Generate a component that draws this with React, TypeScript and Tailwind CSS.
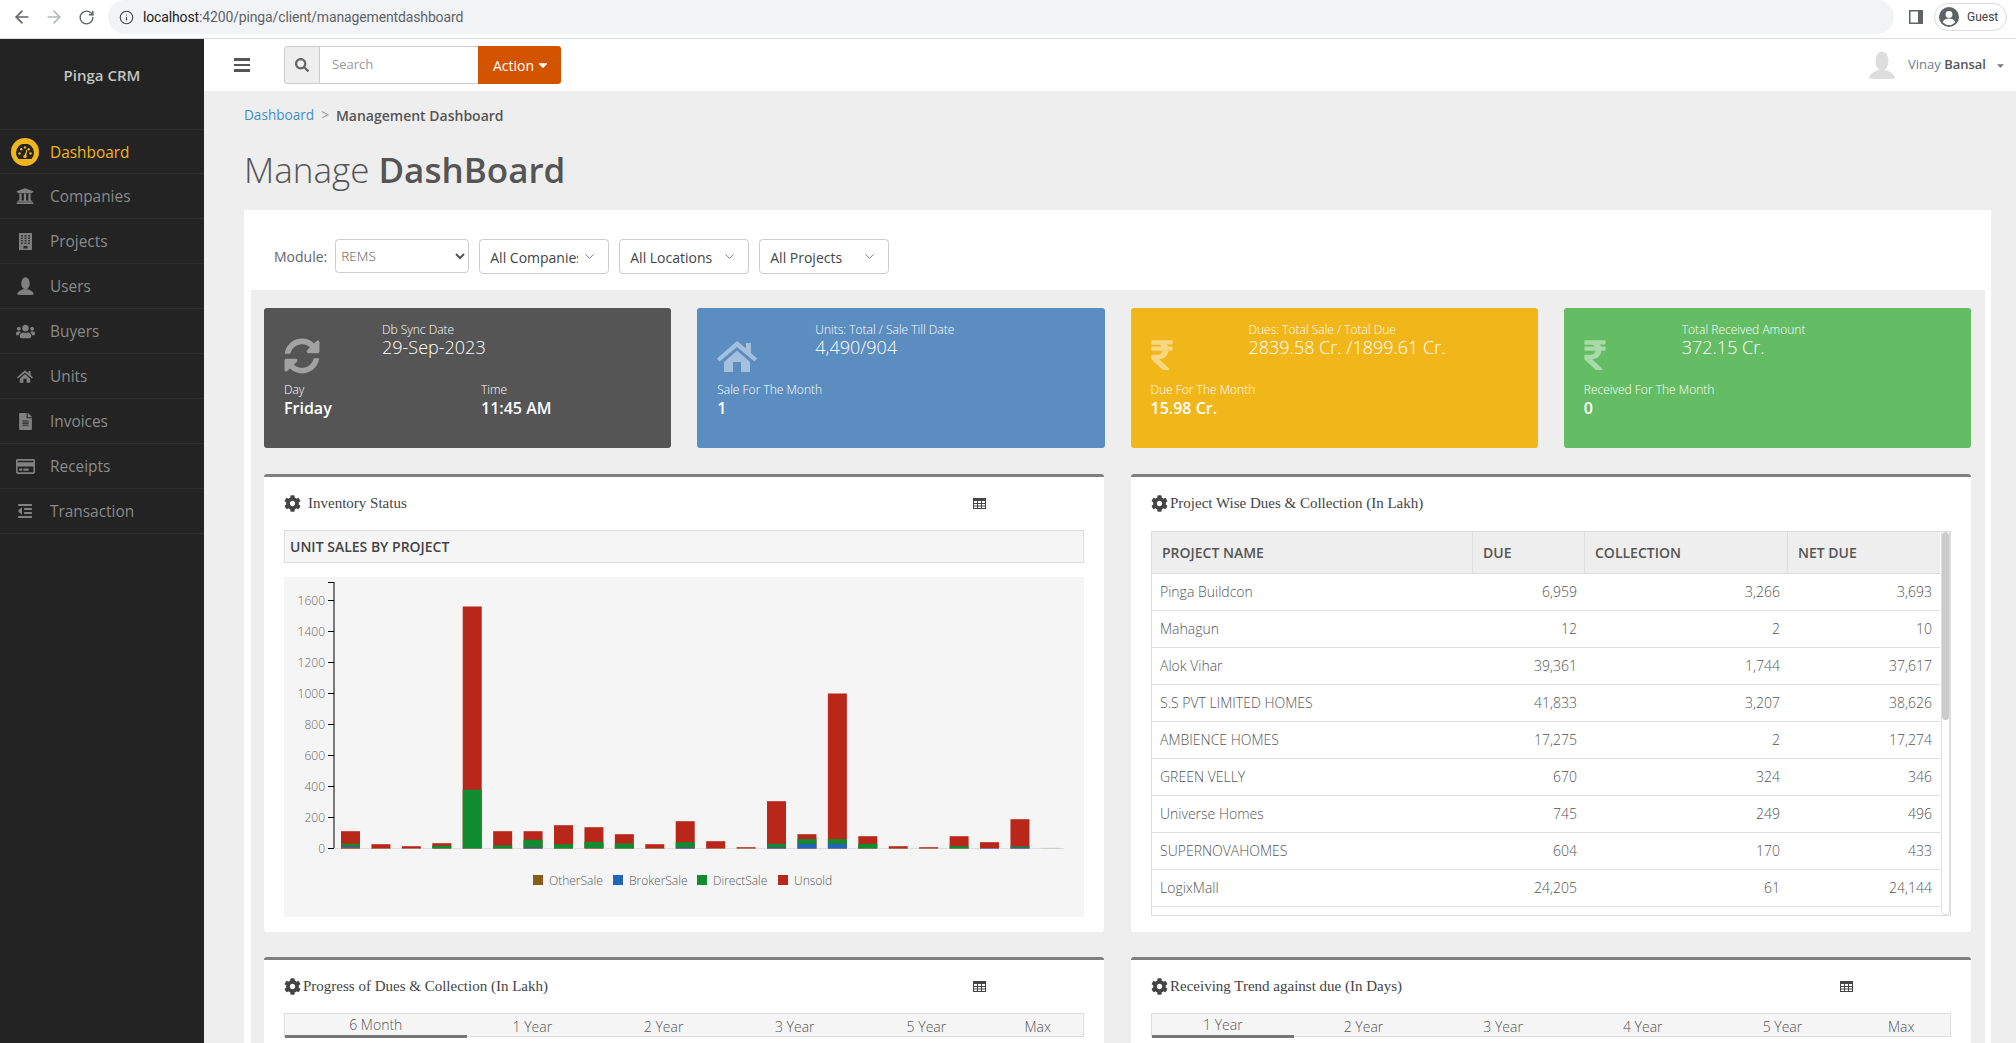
import { ArrowLeft, ArrowRight, ChevronDown, Info, RotateCw } from 'lucide-react'
import {
  FaCaretDown, FaCog, FaFileAlt, FaOutdent, FaRegCreditCard, FaRupeeSign,
  FaSearch, FaSyncAlt, FaUniversity, FaUsers,
} from 'react-icons/fa'
import type { ReactNode } from 'react'

function HomeIcon({ className }: { className: string }) {
  return (
    <svg viewBox="0 0 40 31" className={className} fill="currentColor">
      <path d="M20 0l9 7.500V2h5v10l6 5.500-2.500 3L20 6 2.500 20.500 0 17.500z" />
      <path d="M7 21L20 9.500 33 21v10H24V21h-8v10H7z" />
    </svg>
  )
}

function Silhouette({ className }: { className: string }) {
  return (
    <svg viewBox="0 0 26 28" className={className} fill="currentColor">
      <ellipse cx="13" cy="10" rx="6.500" ry="9.500" />
      <path d="M0 27c1-5 6-6.500 9-8h8c3 1.500 8 3 9 8-3 1.500-8 1-13 1s-10 .5-13-1z" />
    </svg>
  )
}

function BuildingIcon() {
  const cells = [0, 1, 2, 3, 4, 5, 6, 7, 8, 9, 10, 11]
  return (
    <svg width="13" height="17" viewBox="0 0 13 17">
      <rect width="13" height="17" fill="#7d7d7d" />
      {cells.map((c) => (
        <rect key={c} x={2 + (c % 3) * 3.500} y={2 + Math.floor(c / 3) * 2.500} width="2" height="1.500" fill="#3a3a3a" />
      ))}
      <rect x="4.500" y="13" width="4" height="2.500" fill="#2a2a2a" />
    </svg>
  )
}

function GaugeIcon() {
  return (
    <svg width="18" height="15" viewBox="0 0 18 15">
      <path d="M2.600 15A9 9 0 1 1 15.400 15z" fill="#232323" />
      <g fill="#f1b61a">
        <circle cx="3.500" cy="9.500" r="1.200" />
        <circle cx="5.200" cy="5.200" r="1.200" />
        <circle cx="9" cy="3.400" r="1.200" />
        <circle cx="12.800" cy="5.200" r="1.200" />
        <circle cx="14.500" cy="9.500" r="1.200" />
        <path d="M8 13l2.600-7.500.9.300L10 13z" />
        <circle cx="9" cy="12.400" r="1.700" />
      </g>
    </svg>
  )
}

function GridIcon() {
  return (
    <svg width="13" height="11" viewBox="0 0 13 11" className="text-[#444]">
      <rect x=".5" y=".5" width="12" height="10" fill="none" stroke="currentColor" />
      <rect x="0" y="0" width="13" height="3" fill="currentColor" />
      <path d="M4.500 3v7.500M8.500 3v7.500M1 5.500h11M1 8h11" stroke="currentColor" strokeWidth="1" />
    </svg>
  )
}

const navItems = [
  { label: 'Companies', icon: <FaUniversity size={18} /> },
  { label: 'Projects', icon: <BuildingIcon /> },
  { label: 'Users', icon: <Silhouette className="h-[18px] w-[17px]" /> },
  { label: 'Buyers', icon: <FaUsers size={19} /> },
  { label: 'Units', icon: <HomeIcon className="h-[13px] w-[16px]" /> },
  { label: 'Invoices', icon: <FaFileAlt size={17} /> },
  { label: 'Receipts', icon: <FaRegCreditCard size={19} /> },
  { label: 'Transaction', icon: <FaOutdent size={16} /> },
]

const rupee = <FaRupeeSign className="h-[34px] w-[22px]" />

const statCards = [
  {
    color: 'bg-[#555555]', icon: <FaSyncAlt size={36} />, label: 'Db Sync Date', value: '29-Sep-2023',
    bottom: [{ label: 'Day', value: 'Friday' }, { label: 'Time', value: '11:45 AM' }],
  },
  {
    color: 'bg-[#5c8dc1]', icon: <HomeIcon className="mt-[3px] h-[31px] w-[40px]" />, label: 'Units: Total / Sale Till Date', value: '4,490/904',
    bottom: [{ label: 'Sale For The Month', value: '1' }],
  },
  {
    color: 'bg-[#f1b61a]', icon: rupee, label: 'Dues: Total Sale / Total Due', value: '2839.58 Cr. /1899.61 Cr.',
    bottom: [{ label: 'Due For The Month', value: '15.98 Cr.' }],
  },
  {
    color: 'bg-[#64bd65]', icon: rupee, label: 'Total Received Amount', value: '372.15 Cr.',
    bottom: [{ label: 'Received For The Month', value: '0' }],
  },
]

const dueRows = [
  ['Pinga Buildcon', '6,959', '3,266', '3,693'],
  ['Mahagun', '12', '2', '10'],
  ['Alok Vihar', '39,361', '1,744', '37,617'],
  ['S.S PVT LIMITED HOMES', '41,833', '3,207', '38,626'],
  ['AMBIENCE HOMES', '17,275', '2', '17,274'],
  ['GREEN VELLY', '670', '324', '346'],
  ['Universe Homes', '745', '249', '496'],
  ['SUPERNOVAHOMES', '604', '170', '433'],
  ['LogixMall', '24,205', '61', '24,144'],
  ['', '', '', ''],
]

// heights in px: [total, direct, broker, other]
const bars = [
  [17.3, 2.3, 1.3, 1.3], [4.3, 0, 0, 0.4], [2.3, 0, 0, 0.3], [5.3, 2.7, 0, 0],
  [242, 58.7, 0, 0], [17.3, 3, 0, 0], [17.3, 7.7, 1, 0], [23.3, 4.3, 0, 0],
  [21.3, 6.3, 0, 0.3], [14.3, 5, 0, 0], [4.3, 0, 0, 0.4], [27.3, 5.3, 1, 0],
  [7.3, 0, 0, 0.3], [1.3, 0, 0, 0.3], [47.3, 3.7, 1, 0], [14.3, 4.7, 4.7, 0],
  [155, 4.7, 4.7, 0], [12.3, 4.7, 0, 0], [2.3, 0, 0, 0.7], [1.3, 0, 0, 0.3],
  [12.3, 2.3, 0, 0], [6.3, 0, 0.4, 0], [29.3, 1.3, 1, 0], [0.6, 0.6, 0, 0],
]

const RED = '#b9271a'
const GREEN = '#0e8c2e'
const BLUE = '#2565b5'
const BROWN = '#855c1a'

function BrowserBar() {
  return (
    <div className="flex h-[39px] items-start border-b border-[#dadce0] bg-white">
      <div className="flex h-[34px] w-[108px] items-center text-[#5f6368]">
        <ArrowLeft size={20} strokeWidth={2} className="ml-[12px]" />
        <ArrowRight size={20} strokeWidth={2} className="ml-[12px] text-[#b4b7ba]" />
        <RotateCw size={17} strokeWidth={2} className="ml-[14px]" />
      </div>
      <div className="flex h-[34px] w-[1786px] items-center rounded-[17px] bg-[#f1f3f4] pl-[11px] font-['Roboto',sans-serif] text-[14px] tracking-[-0.14px] text-[#5f6368]">
        <Info size={15} strokeWidth={1.8} className="mr-[9px] text-[#444]" />
        <span className="text-[#202124]">localhost</span>:4200/pinga/client/managementdashboard
      </div>
      <svg width="14" height="14" viewBox="0 0 14 14" className="ml-[15px] mt-[10px]">
        <rect width="14" height="14" fill="#5f6368" />
        <rect x="1.5" y="1.5" width="7.5" height="11" fill="#fff" />
      </svg>
      <div className="ml-[11px] mt-[3px] flex h-[28px] w-[73px] items-center rounded-[14px] border border-[#dadce0] pl-[4px] font-['Roboto',sans-serif] text-[12px] text-[#3c4043]">
        <svg width="20" height="20" viewBox="0 0 20 20">
          <circle cx="10" cy="10" r="10" fill="#5f6368" />
          <circle cx="10" cy="7.4" r="3.4" fill="#fff" />
          <path d="M3.6 15c1.3-2.4 3.8-3.5 6.4-3.5s5.100 1.100 6.400 3.500a8.200 8.200 0 0 1-12.800 0z" fill="#fff" />
        </svg>
        <span className="ml-[8px]">Guest</span>
      </div>
    </div>
  )
}

function Sidebar() {
  return (
    <aside className="flex w-[204px] shrink-0 flex-col bg-[#232323]">
      <div className="flex h-[90px] items-start justify-center pt-[25px] text-[15px] font-semibold leading-[22px] text-[#c4c4c4]">
        Pinga CRM
      </div>
      <div className="flex h-[45px] items-center border-y border-[#2d2d2d] text-[15.4px] text-[#f1b61a]">
        <span className="ml-[11px] mr-[11px] flex h-[28px] w-[28px] items-center justify-center rounded-full bg-[#f1b61a]">
          <GaugeIcon />
        </span>
        <span className="pt-[2px]">Dashboard</span>
      </div>
      {navItems.map((item) => (
        <div key={item.label} className="flex h-[45px] items-center border-b border-[#2d2d2d] text-[15.4px] text-[#8a8a8a]">
          <span className="flex w-[50px] justify-center text-[#808080]">{item.icon}</span>
          <span className="pt-[2px]">{item.label}</span>
        </div>
      ))}
    </aside>
  )
}

function Topbar() {
  return (
    <div className="flex h-[52px] shrink-0 items-center bg-white">
      <div className="ml-[30px] flex w-[16px] flex-col gap-[3px]">
        <span className="h-[2.500px] bg-[#555]" />
        <span className="h-[2.500px] bg-[#555]" />
        <span className="h-[2.500px] bg-[#555]" />
      </div>
      <div className="ml-[34px] flex h-[38px] w-[277px]">
        <span className="flex w-[36px] items-center justify-center rounded-l-[3px] border border-[#cccccc] bg-[#eeeeee] text-[#666]">
          <FaSearch size={14} />
        </span>
        <span className="flex w-[158px] items-center border-y border-[#cccccc] pl-[12px] text-[13px] text-[#999999]">Search</span>
        <button className="flex w-[83px] items-center gap-[2px] rounded-r-[3px] bg-[#d35400] pl-[15px] text-[14px] text-white">
          Action <FaCaretDown size={14} />
        </button>
      </div>
      <div className="ml-auto flex items-center">
        <Silhouette className="h-[28px] w-[26px] text-[#dddddd]" />
        <span className="ml-[13px] text-[13px] text-[#6b7d90]">Vinay <span className="font-semibold text-[#555]">Bansal</span></span>
        <FaCaretDown size={11} className="ml-[9px] mr-[10px] text-[#777]" />
      </div>
    </div>
  )
}

function MultiSelect({ label, width, clip }: { label: string; width: string; clip?: boolean }) {
  return (
    <div className={`flex h-[35px] items-center justify-between rounded-[4px] border border-[#cccccc] pl-[10px] pr-[11px] text-[14px] text-[#444] ${width}`}>
      <span className={`pt-[1px] ${clip ? 'w-[88px] overflow-hidden whitespace-nowrap' : 'whitespace-nowrap'}`}>{label}</span>
      <ChevronDown size={15} strokeWidth={1} className="text-[#333]" />
    </div>
  )
}

function StatCard({ card }: { card: (typeof statCards)[number] }) {
  return (
    <div className={`h-[140px] rounded-[3px] px-[20px] pt-[14px] text-white ${card.color}`}>
      <div className="flex h-[60px]">
        <div className="w-[98px] shrink-0 pt-[16px] opacity-45">{card.icon}</div>
        <div>
          <div className="text-[12px] font-light leading-[16px]">{card.label}</div>
          <div className="text-[18px] font-light leading-[18px]">{card.value}</div>
        </div>
      </div>
      <div className="flex">
        {card.bottom.map((b) => (
          <div key={b.label} className="w-[197px] shrink-0">
            <div className="text-[12px] font-light leading-[16px]">{b.label}</div>
            <div className="text-[16px] font-semibold leading-[20px]">{b.value}</div>
          </div>
        ))}
      </div>
    </div>
  )
}

function Panel({ title, grid, wideGap, children }: { title: string; grid?: boolean; wideGap?: boolean; children: ReactNode }) {
  return (
    <div className="rounded-[3px] border-t-[3px] border-[#7f7f7f] bg-white px-[20px]">
      <div className="flex h-[53px] items-center">
        <div className={`flex w-[689px] items-center text-[#444] ${wideGap ? 'gap-[7px]' : 'gap-[2px]'}`}>
          <FaCog size={17} />
          <span className="font-['Liberation_Serif',serif] text-[15px] leading-none">{title}</span>
        </div>
        {grid && <GridIcon />}
      </div>
      {children}
    </div>
  )
}

function SalesChart() {
  const base = 271.5
  const ticks = [1600, 1400, 1200, 1000, 800, 600, 400, 200, 0]
  return (
    <svg width="800" height="340" viewBox="0 0 800 340" className="mt-[14px] block bg-[#f5f5f5]">
      {ticks.map((t) => {
        const y = base - t * 0.155
        return (
          <g key={t}>
            <line x1="44" x2="50" y1={y} y2={y} stroke="#000" />
            <text x="41" y={y + 4.500} textAnchor="end" fontSize="12" fontWeight="300" fontFamily="Open Sans, sans-serif" fill="#666">{t}</text>
          </g>
        )
      })}
      <line x1="44" x2="50" y1="5.500" y2="5.500" stroke="#000" />
      <line x1="50" x2="50" y1="5" y2="272" stroke="#000" />
      <line x1="50" x2="780" y1="271.500" y2="271.500" stroke="#dddddd" />
      {bars.map(([total, direct, broker, other], i) => {
        const x = 57 + i * 30.43
        return (
          <g key={i}>
            <rect x={x} y={base - total} width="19" height={total} fill={direct === total ? '#a9cdb2' : RED} />
            {direct > 0 && direct !== total && <rect x={x} y={base - direct - broker - other} width="19" height={direct} fill={GREEN} />}
            {broker > 0 && <rect x={x} y={base - broker - other} width="19" height={broker} fill={BLUE} />}
            {other > 0 && <rect x={x} y={base - other} width="19" height={other} fill={BROWN} />}
          </g>
        )
      })}
      {[
        { x: 249, color: BROWN, label: 'OtherSale' },
        { x: 329, color: BLUE, label: 'BrokerSale' },
        { x: 413, color: GREEN, label: 'DirectSale' },
        { x: 494, color: RED, label: 'Unsold' },
      ].map((l) => (
        <g key={l.label}>
          <rect x={l.x} y="298" width="10" height="10" fill={l.color} />
          <text x={l.x + 16} y="308" fontSize="12" fontWeight="300" fontFamily="Open Sans, sans-serif" fill="#555">{l.label}</text>
        </g>
      ))}
    </svg>
  )
}

function DuesTable() {
  const headers = ['PROJECT NAME', 'DUE', 'COLLECTION', 'NET DUE']
  return (
    <div className="mt-[1px] flex h-[385px] overflow-hidden border border-[#dddddd]">
      <table className="h-fit w-[788px] shrink-0 table-fixed border-separate border-spacing-0 text-[14px] text-[#555]">
        <colgroup>
          <col className="w-[321px]" />
          <col className="w-[112px]" />
          <col className="w-[203px]" />
          <col className="w-[152px]" />
        </colgroup>
        <thead>
          <tr className="h-[42px] bg-[#eeeeee]">
            {headers.map((h, i) => (
              <th key={h} className={`border-b border-[#dddddd] pl-[10px] text-left font-semibold ${i < 3 ? 'border-r' : ''}`}>{h}</th>
            ))}
          </tr>
        </thead>
        <tbody>
          {dueRows.map((row, r) => (
            <tr key={r} className="h-[37px] font-light">
              {row.map((c, i) => (
                <td key={i} className={`border-b border-[#dddddd] pb-[2px] ${i === 0 ? 'pl-[8px]' : 'pr-[8px] text-right'}`}>{c}</td>
              ))}
            </tr>
          ))}
        </tbody>
      </table>
      <div className="ml-[1px] h-full w-[10px] rounded-b-[5px] border border-t-0 border-[#dddddd]">
        <div className="h-[188px] rounded-[4px] bg-[#cccccc]" />
      </div>
    </div>
  )
}

function Tabs({ tabs }: { tabs: { label: string; width: string }[] }) {
  return (
    <div className="flex h-[24px] border border-[#dddddd] bg-[#f5f5f5] text-[14px] font-light text-[#555]">
      {tabs.map((t, i) => (
        <div key={t.label} className={`flex items-center justify-center ${t.width} ${i === 0 ? 'h-[24px] border-b-[3px] border-[#777777]' : 'pt-[2px]'}`}>
          {t.label}
        </div>
      ))}
    </div>
  )
}

export default function App() {
  return (
    <div className="flex h-screen w-screen flex-col overflow-hidden bg-white font-['Open_Sans',sans-serif]">
      <BrowserBar />
      <div className="flex min-h-0 flex-1">
        <Sidebar />
        <main className="flex min-w-0 flex-1 flex-col bg-[#eeeeee]">
          <Topbar />
          <div className="pl-[40px] pr-[25px]">
            <div className="flex h-[48px] items-center pt-[1px] text-[13.6px]">
              <span className="text-[#3f8fc5]">Dashboard</span>
              <span className="mx-[7px] text-[#999]">&gt;</span>
              <span className="text-[14px] font-semibold text-[#555]">Management Dashboard</span>
            </div>
            <h1 className="flex h-[71px] items-center pb-[9px] text-[35px] font-light text-[#555]">
              Manage&nbsp;<span className="font-semibold">DashBoard</span>
            </h1>
            <div className="bg-white pl-[7px] pr-[6px]">
              <div className="flex h-[80px] items-start gap-[10px] pl-[23px] pt-[29px]">
                <div className="flex h-[34px] items-center text-[14px] text-[#666]">Module:</div>
                <select className="-ml-[2px] h-[34px] w-[134px] rounded-[4px] border border-[#cccccc] bg-white pl-[1px] text-[13.5px] font-light text-[#555]" defaultValue="REMS">
                  <option>REMS</option>
                </select>
                <MultiSelect label="All Companies" width="w-[130px]" clip />
                <MultiSelect label="All Locations" width="w-[130px]" />
                <MultiSelect label="All Projects" width="w-[130px]" />
              </div>
              <div className="bg-[#eeeeee] pl-[13px] pr-[14px] pt-[18px]">
                <div className="grid grid-cols-4 gap-[26px]">
                  {statCards.map((card) => <StatCard key={card.label} card={card} />)}
                </div>
                <div className="mt-[26px] grid grid-cols-2 gap-x-[27px] gap-y-[25px]">
                  <Panel title="Inventory Status" grid wideGap>
                    <div className="flex h-[33px] items-center border border-[#dddddd] bg-[#f5f5f5] pl-[5px] text-[14px] font-semibold text-[#444]">
                      UNIT SALES BY PROJECT
                    </div>
                    <SalesChart />
                    <div className="h-[15px]" />
                  </Panel>
                  <Panel title="Project Wise Dues & Collection (In Lakh)">
                    <DuesTable />
                    <div className="h-[15px]" />
                  </Panel>
                  <Panel title="Progress of Dues & Collection (In Lakh)" grid>
                    <Tabs tabs={[
                      { label: '6 Month', width: 'w-[182px]' }, { label: '1 Year', width: 'w-[132px]' }, { label: '2 Year', width: 'w-[131px]' },
                      { label: '3 Year', width: 'w-[132px]' }, { label: '5 Year', width: 'w-[132px]' }, { label: 'Max', width: 'w-[91px]' },
                    ]} />
                    <div className="h-[30px]" />
                  </Panel>
                  <Panel title="Receiving Trend against due (In Days)" grid>
                    <Tabs tabs={[
                      { label: '1 Year', width: 'w-[142px]' }, { label: '2 Year', width: 'w-[140px]' }, { label: '3 Year', width: 'w-[140px]' },
                      { label: '4 Year', width: 'w-[140px]' }, { label: '5 Year', width: 'w-[140px]' }, { label: 'Max', width: 'w-[98px]' },
                    ]} />
                    <div className="h-[30px]" />
                  </Panel>
                </div>
              </div>
            </div>
          </div>
        </main>
      </div>
    </div>
  )
}
